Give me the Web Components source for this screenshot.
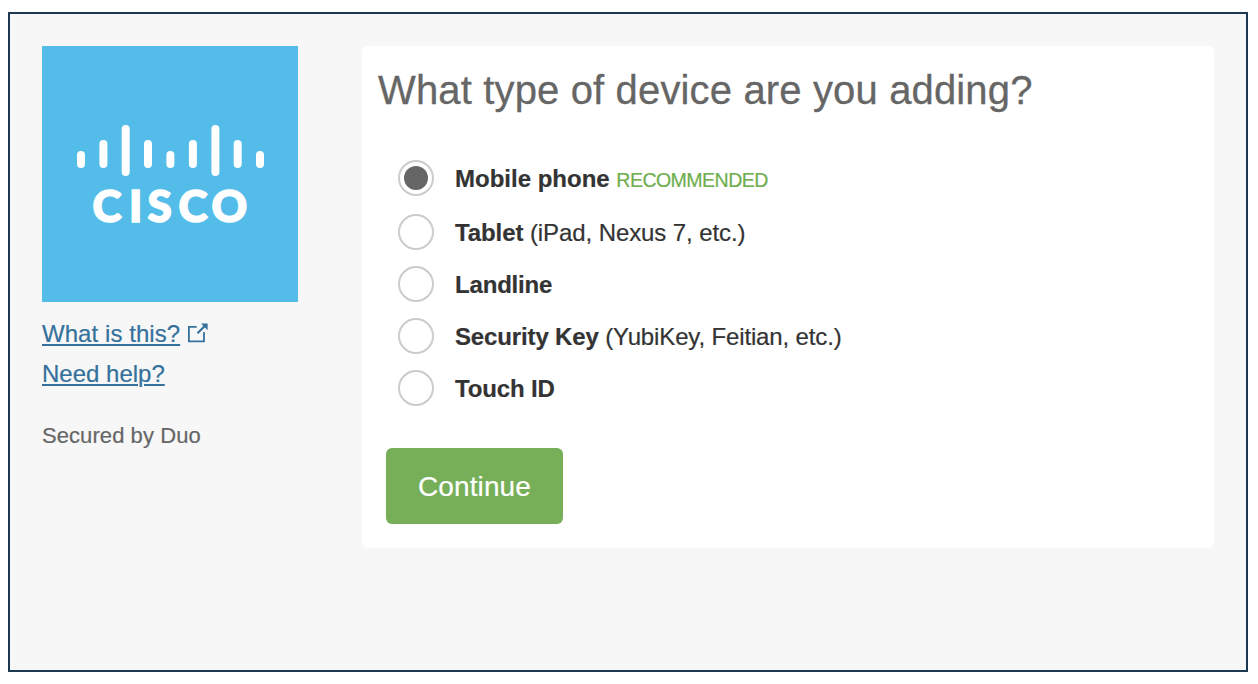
<!DOCTYPE html>
<html lang="en">
<head>
<meta charset="utf-8">
<title>Add a device</title>
<style>
  html { background: #fff; }
  body { margin: 0; padding: 12px 10px 12px 8px; box-sizing: border-box; height: 684px; overflow: hidden; }
</style>
</head>
<body>
<duo-prompt>
  <duo-sidebar slot="side">
    <help-link external>What is this?</help-link>
    <help-link>Need help?</help-link>
    <span slot="note">Secured by Duo</span>
  </duo-sidebar>
  <device-form>
    <span slot="title">What type of device are you adding?</span>
    <device-option checked name="Mobile phone" badge="RECOMMENDED"></device-option>
    <device-option name="Tablet" style="letter-spacing:-.09px">(iPad, Nexus 7, etc.)</device-option>
    <device-option name="Landline" style="letter-spacing:-.18px"></device-option>
    <device-option name="Security Key" style="letter-spacing:-.14px">(YubiKey, Feitian, etc.)</device-option>
    <device-option name="Touch ID" style="letter-spacing:-.16px"></device-option>
    <duo-button slot="action">Continue</duo-button>
  </device-form>
</duo-prompt>
<script>
  const define = (name, html, setup) => {
    const tpl = document.createElement('template');
    tpl.innerHTML = html;
    customElements.define(name, class extends HTMLElement {
      constructor() {
        super();
        this.attachShadow({ mode: 'open' }).append(tpl.content.cloneNode(true));
      }
      connectedCallback() { if (setup) setup(this, this.shadowRoot); }
    });
  };

  define('duo-prompt', `
    <style>
      :host { display: flex; align-items: flex-start; gap: 64px; box-sizing: border-box; height: 660px;
        padding: 32px; border: 2px solid #1d3952; background: #f7f7f7;
        font-family: "Liberation Sans", Arial, sans-serif; font-size: 24px; color: #333; -webkit-text-stroke: .2px; }
    </style>
    <slot name="side"></slot><slot></slot>`);

  define('cisco-logo', `
    <style>
      :host { display: block; width: 256px; height: 256px; background: #54bce8; }
      svg { display: block; }
      text { font: 900 44px Lato, sans-serif; fill: #fff; stroke: #fff; stroke-width: 1.6px; }
    </style>
    <svg width="256" height="256" viewBox="0 0 256 256">
      <path d="M39 109v9M61.4 98v20M83.7 83v43M106 98v20M128.4 109v9M150.9 98v20M173.4 83v43M195.7 98v20M218 109v9"
        fill="none" stroke="#fff" stroke-width="8" stroke-linecap="round"/>
      <text y="176" x="50.5 87 105.5 136.5 169.5">CISCO</text>
    </svg>`);

  define('duo-sidebar', `
    <style>
      :host { display: block; width: 256px; flex: none; }
      nav { display: flex; flex-direction: column; padding-top: 12px; }
      p { margin: 28px 0 0; font-size: 22px; line-height: 28px; color: #666; letter-spacing: .07px; }
    </style>
    <cisco-logo></cisco-logo>
    <nav><slot></slot></nav>
    <p><slot name="note"></slot></p>`);

  define('help-link', `
    <style>
      :host { display: flex; align-items: center; gap: 8px; height: 40px; color: #34719c; }
      a { color: inherit; line-height: 40px; text-decoration: underline; text-decoration-thickness: 2px; text-underline-offset: 2px; }
      svg { display: none; margin: -3px 0 0 -.5px; }
      :host([external]) { letter-spacing: .06px; }
      :host([external]) svg { display: block; }
    </style>
    <a href="#"><slot></slot></a>
    <svg width="20" height="20" viewBox="0 0 20 20">
      <path d="M8.7 3.8H.9V18.3H16V9" fill="none" stroke="currentColor" stroke-width="1.8"/>
      <path d="M9.5 10.2L17 2.8" stroke="currentColor" stroke-width="2.2"/>
      <path d="M13 .6H19.6V7.2Z" fill="currentColor"/>
    </svg>`);

  define('device-form', `
    <style>
      :host { display: flex; flex-direction: column; align-items: flex-start; box-sizing: border-box;
        flex: 1; height: 502px; padding: 16px; border-radius: 6px; background: #fff; }
      h1 { margin: 0; font-size: 40px; line-height: 56px; font-weight: 400; color: #666; white-space: nowrap;
        letter-spacing: .15px; -webkit-text-stroke: .3px; }
      .list { display: flex; flex-direction: column; gap: 16px; padding: 42px 0 0 20px; }
      .action { padding: 42px 0 0 8px; }
    </style>
    <h1><slot name="title"></slot></h1>
    <div class="list"><slot></slot></div>
    <div class="action"><slot name="action"></slot></div>`);

  define('device-option', `
    <style>
      :host { display: flex; align-items: center; gap: 21px; height: 36px; white-space: nowrap; }
      :host([checked]) { margin-bottom: 2px; }
      i { display: grid; place-items: center; box-sizing: border-box; width: 36px; height: 36px;
        border: 2px solid #ccc; border-radius: 50%; background: #fff; }
      :host([checked]) i::before { content: ""; width: 24px; height: 24px; border-radius: 50%; background: #666; }
      label { line-height: 36px; padding-top: 2px; }
      em { font-style: normal; font-size: 19.6px; line-height: 1; letter-spacing: -.58px; color: #6fae4f; }
    </style>
    <i></i><label><b></b> <em></em><slot></slot></label>`,
    (el, root) => {
      root.querySelector('b').textContent = el.getAttribute('name');
      const em = root.querySelector('em');
      if (el.hasAttribute('badge')) em.textContent = el.getAttribute('badge'); else em.remove();
    });

  define('duo-button', `
    <style>
      :host { display: block; }
      button { display: block; width: 177px; height: 76px; padding: 2px 0 0; border: 0; border-radius: 6px;
        background: #76af58; color: #fff; font: 28px "Liberation Sans", Arial, sans-serif; letter-spacing: .1px; }
    </style>
    <button><slot></slot></button>`);
</script>
</body>
</html>
